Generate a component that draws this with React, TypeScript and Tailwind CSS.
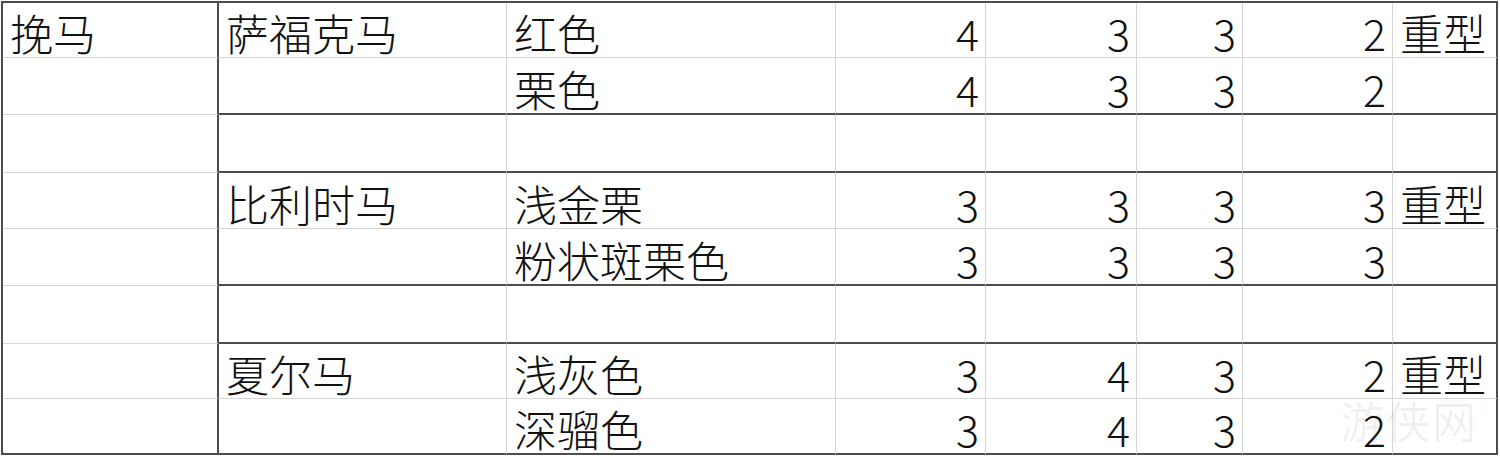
const COLS = [216, 288, 329, 150, 151, 106, 150, 105];
const ROWS = [55, 57, 58, 56, 57, 58, 55, 56];

// bottom border of each row is dark (thick) for the group cols (1..8)
const DARK_BOTTOM = [false, true, true, false, true, true, false, true];

type Cell = string | number | null;

const DATA: Cell[][] = [
  ["挽马", "萨福克马", "红色", 4, 3, 3, 2, "重型"],
  [null, null, "栗色", 4, 3, 3, 2, null],
  [null, null, null, null, null, null, null, null],
  [null, "比利时马", "浅金栗", 3, 3, 3, 3, "重型"],
  [null, null, "粉状斑栗色", 3, 3, 3, 3, null],
  [null, null, null, null, null, null, null, null],
  [null, "夏尔马", "浅灰色", 3, 4, 3, 2, "重型"],
  [null, null, "深骝色", 3, 4, 3, 2, null],
];

function cellClass(r: number, c: number) {
  const last = r === ROWS.length - 1;
  const darkBottom = last || (c > 0 && DARK_BOTTOM[r]);
  const darkRight = c === 0 || c === COLS.length - 1;
  return [
    "flex items-end whitespace-nowrap box-border",
    darkBottom ? "border-b-2 border-b-[#4d4d4d]" : "border-b border-b-[#d6d6d6]",
    darkRight ? "border-r-2 border-r-[#4d4d4d]" : "border-r border-r-[#d6d6d6]",
    c >= 3 && c <= 6 ? "justify-end pr-[6px]" : "justify-start pl-[7px]",
  ].join(" ");
}

export default function App() {
  return (
    <div className="relative h-[456px] w-[1500px] overflow-hidden bg-white">
      <div
        className="ml-[1px] mt-[1px] inline-block border-l-2 border-t-2 border-[#4d4d4d] font-light leading-none text-[#111]"
        style={{ fontFamily: '"Noto Sans CJK SC", "Noto Sans", sans-serif' }}
      >
        {DATA.map((row, r) => (
          <div key={r} className="flex">
            {row.map((v, c) => (
              <div
                key={c}
                className={cellClass(r, c)}
                style={{ width: COLS[c], height: ROWS[r] }}
              >
                {v !== null && (
                  <span className="pb-[2px] text-[43px] leading-[46px]">{v}</span>
                )}
              </div>
            ))}
          </div>
        ))}
      </div>
      {/* faint watermark over the bottom-right corner */}
      <div
        className="pointer-events-none absolute left-[1340px] top-[398px] text-[44px] leading-none tracking-[2px] text-black/[0.06]"
        style={{ fontFamily: '"Noto Sans CJK SC", sans-serif' }}
      >
        游侠网
      </div>
    </div>
  );
}
